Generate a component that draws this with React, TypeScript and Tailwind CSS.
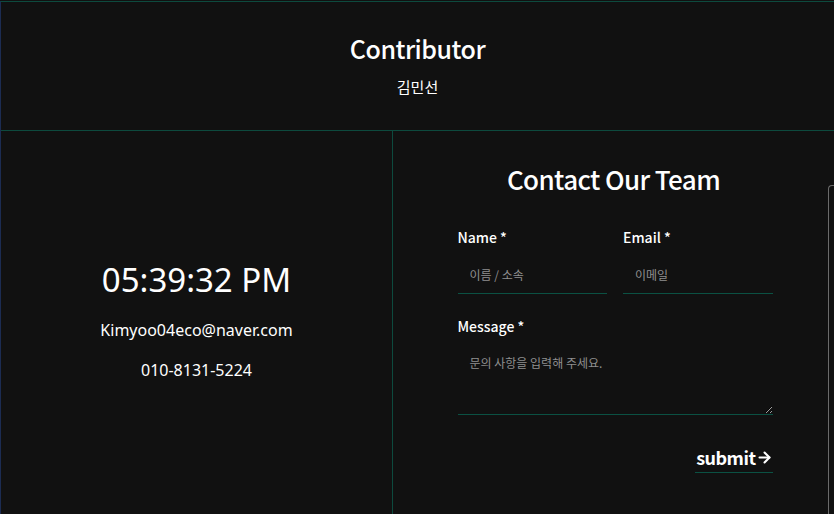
import { ArrowRight } from "lucide-react";

const kr = "font-['Noto_Sans_CJK_KR','Noto_Sans',sans-serif]";

export default function App() {
  return (
    <div className={`h-[514px] w-[834px] overflow-hidden bg-[#111111] pt-px text-white ${kr}`}>
      <div className="flex h-full flex-col border-l border-t border-l-[#1c2c52] border-t-[#0d4a3e]">
        {/* header */}
        <header className="flex h-[129px] shrink-0 flex-col items-center border-b border-[#0d4a3e] pt-[28px]">
          <h1 className="text-[25px] font-medium leading-[36px] tracking-[-0.5px]">Contributor</h1>
          <p className="mt-[11px] text-[15px] leading-[20px]">김민선</p>
        </header>

        <div className="flex flex-1">
          {/* clock + info */}
          <section className="flex w-[392px] flex-col items-center border-r border-[#0d4a3e] pt-[126px]">
            <div className="font-['Noto_Sans',sans-serif] text-[33px] leading-[46px]">05:39:32 PM</div>
            <div className="mt-[16px] font-['Noto_Sans',sans-serif] text-[16px] leading-[22px]">Kimyoo04eco@naver.com</div>
            <div className="mt-[18px] font-['Noto_Sans',sans-serif] text-[16px] leading-[22px]">010-8131-5224</div>
          </section>

          {/* contact form */}
          <section className="relative flex flex-1 flex-col items-center pt-[30px]">
            <h2 className="text-[26px] font-medium leading-[36px] tracking-[-0.6px]">Contact Our Team</h2>
            <form className="ml-[3px] mt-[30px] flex w-[315px] flex-col" onSubmit={(e) => e.preventDefault()}>
              <div className="grid grid-cols-2 gap-4">
                <label className="flex flex-col">
                  <span className="text-[14px] font-medium leading-[20px]">Name *</span>
                  <input
                    placeholder="이름 / 소속"
                    className="mt-[8px] h-[39px] border-0 border-b border-solid border-[#0b5143] bg-transparent px-3 text-[12px] outline-none placeholder:text-[#8f8f8f]"
                  />
                </label>
                <label className="flex flex-col">
                  <span className="text-[14px] font-medium leading-[20px]">Email *</span>
                  <input
                    placeholder="이메일"
                    className="mt-[8px] h-[39px] border-0 border-b border-solid border-[#0b5143] bg-transparent px-3 text-[12px] outline-none placeholder:text-[#8f8f8f]"
                  />
                </label>
              </div>
              <label className="mt-[22px] flex flex-col">
                <span className="text-[14px] font-medium leading-[20px]">Message *</span>
                <textarea
                  placeholder="문의 사항을 입력해 주세요."
                  className="mt-[10px] h-[69px] border-b border-[#0b5143] bg-transparent px-3 py-[8px] text-[12px] outline-none placeholder:text-[#8f8f8f]"
                />
              </label>
              <div className="mt-[30px] flex justify-end">
                <button
                  type="submit"
                  className="flex items-center border-b border-[#0b5143] pb-[3px] pl-px text-[18px] font-bold leading-[24px] tracking-[-0.5px]"
                >
                  submit
                  <ArrowRight className="h-[17px] w-[17px]" strokeWidth={3} />
                </button>
              </div>
            </form>
            <div className="absolute left-[435px] top-[54px] h-[400px] w-[20px] rounded-tl-[4px] border-l border-t border-[#6b6b6b]" />
          </section>
        </div>
      </div>
    </div>
  );
}
